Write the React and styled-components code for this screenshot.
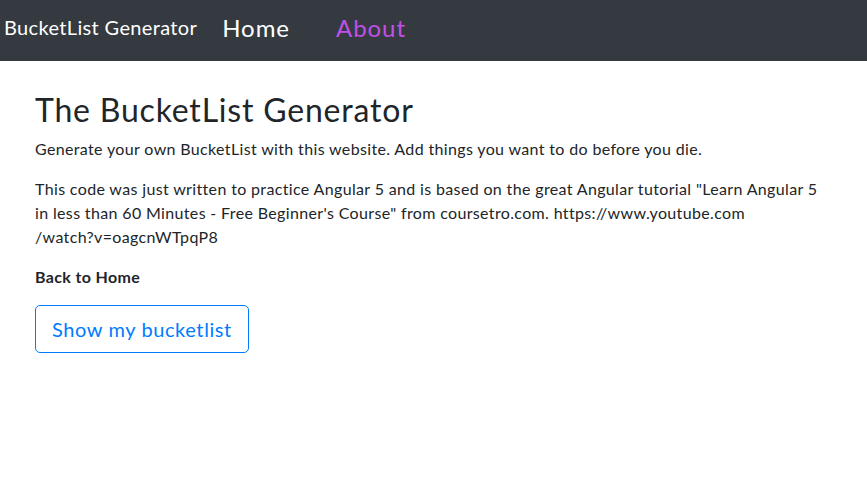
import React from "react";
import styled, { createGlobalStyle } from "styled-components";

const GlobalStyle = createGlobalStyle`
    body {
        margin: 0;
        font-family: Lato, "Open Sans", sans-serif;
        letter-spacing: 0.022em;
        color: #212529;
        background: #fff;
    }
    * { box-sizing: border-box; }
`;

const Navbar = styled.nav`
    display: flex;
    align-items: center;
    height: 61px;
    padding: 0 4px 7px;
    background: #343a40;
`;

const Brand = styled.span`
    font-size: 20px;
    color: #fff;
    margin-right: 25px;
`;

const NavLink = styled.a`
    font-size: 24px;
    letter-spacing: 0.04em;
    color: ${props => props.active ? "#c050e6" : "#fff"};
    margin-right: 46px;
    text-decoration: none;
`;

const Main = styled.main`
    padding: 30px 35px 0;
`;

const Title = styled.h1`
    font-size: 32px;
    font-weight: 400;
    line-height: 1.2;
    letter-spacing: 0.025em;
    margin: 0 0 8px;
`;

const Text = styled.p`
    font-size: 16px;
    line-height: 24px;
    margin: 0 0 16px;
    max-width: 800px;
    font-weight: ${props => props.bold ? 700 : 400};
`;

const OutlineButton = styled.button`
    font-family: inherit;
    letter-spacing: 0.03em;
    font-size: 20px;
    line-height: 1.5;
    padding: 8px 16px;
    color: #007bff;
    background: transparent;
    border: 1px solid #007bff;
    border-radius: 5px;
`;

export default function App() {
    return (
        <>
            <GlobalStyle />
            <Navbar>
                <Brand>BucketList Generator</Brand>
                <NavLink>Home</NavLink>
                <NavLink active>About</NavLink>
            </Navbar>
            <Main>
                <Title>The BucketList Generator</Title>
                <Text>Generate your own BucketList with this website. Add things you want to do before you die.</Text>
                <Text>
                    This code was just written to practice Angular 5 and is based on the great Angular tutorial "Learn Angular 5 in less than 60 Minutes - Free Beginner's Course" from coursetro.com. https://www.youtube.com<br />/watch?v=oagcnWTpqP8
                </Text>
                <Text bold>Back to Home</Text>
                <OutlineButton>Show my bucketlist</OutlineButton>
            </Main>
        </>
    );
}
